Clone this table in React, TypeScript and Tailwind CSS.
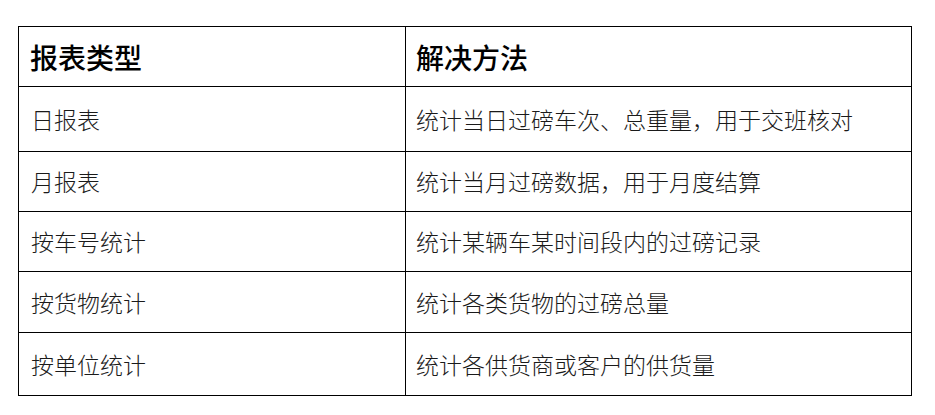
import React from "react";

const rows: { a: string; b: string; h: string }[] = [
  { a: "日报表", b: "统计当日过磅车次、总重量，用于交班核对", h: "h-[65px]" },
  { a: "月报表", b: "统计当月过磅数据，用于月度结算", h: "h-[60px]" },
  { a: "按车号统计", b: "统计某辆车某时间段内的过磅记录", h: "h-[60px]" },
  { a: "按货物统计", b: "统计各类货物的过磅总量", h: "h-[61px]" },
  { a: "按单位统计", b: "统计各供货商或客户的供货量", h: "h-[62px]" },
];

export default function App() {
  return (
    <div className="w-[935px] h-[415px] bg-white pt-[26px] pl-[18px] font-['Noto_Sans_CJK_SC',sans-serif]">
      <div className="w-[894px] border border-black flex flex-col">
        <div className="flex h-[60px] border-b border-black">
          <div className="w-[387px] shrink-0 border-r border-black flex items-center pl-[11px] text-[28px] font-medium text-black">
            报表类型
          </div>
          <div className="flex-1 flex items-center pl-[10px] text-[28px] font-medium text-black">
            解决方法
          </div>
        </div>
        {rows.map((r, i) => (
          <div
            key={r.a}
            className={`flex ${r.h} ${i < rows.length - 1 ? "border-b border-black" : ""}`}
          >
            <div className="w-[387px] shrink-0 border-r border-black flex items-center pl-[12px] text-[23px] font-light text-[#1a1a1a]">
              {r.a}
            </div>
            <div className="flex-1 flex items-center pl-[10px] text-[23px] font-light text-[#1a1a1a]">
              {r.b}
            </div>
          </div>
        ))}
      </div>
    </div>
  );
}
